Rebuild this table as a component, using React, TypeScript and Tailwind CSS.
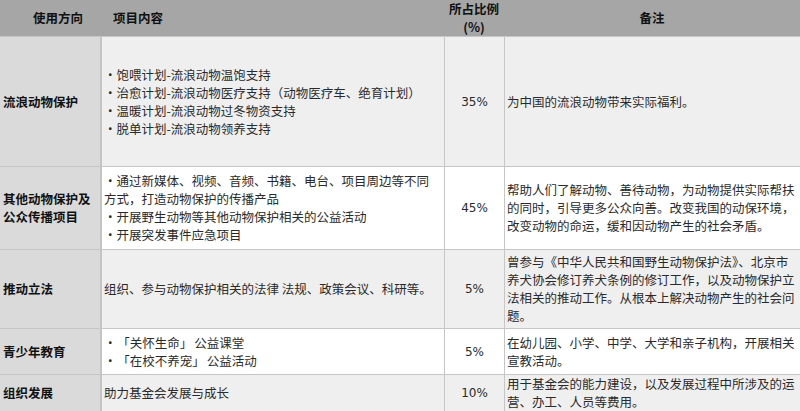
import React from "react";

const cjk = { fontFamily: '"Noto Sans CJK SC", "Noto Sans", sans-serif' };
const num = { fontFamily: '"DejaVu Sans", sans-serif' };

type Row = {
  label: string[];
  content: React.ReactNode[];
  pct: string;
  note: string[];
  h: string;
  bg: string;
};

const Open = () => <span className="pl-[7px]">「</span>;
const Close = () => <span className="pr-[2px]">」</span>;

const rows: Row[] = [
  {
    label: ["流浪动物保护"],
    content: [
      "・饱喂计划-流浪动物温饱支持",
      "・治愈计划-流浪动物医疗支持（动物医疗车、绝育计划）",
      "・温暖计划-流浪动物过冬物资支持",
      "・脱单计划-流浪动物领养支持",
    ],
    pct: "35%",
    note: ["为中国的流浪动物带来实际福利。"],
    h: "h-[130px]",
    bg: "bg-[#efefef]",
  },
  {
    label: ["其他动物保护及", "公众传播项目"],
    content: [
      "・通过新媒体、视频、音频、书籍、电台、项目周边等不同",
      "方式，打造动物保护的传播产品",
      "・开展野生动物等其他动物保护相关的公益活动",
      "・开展突发事件应急项目",
    ],
    pct: "45%",
    note: [
      "帮助人们了解动物、善待动物，为动物提供实际帮扶",
      "的同时，引导更多公众向善。改变我国的动保环境，",
      "改变动物的命运，缓和因动物产生的社会矛盾。",
    ],
    h: "h-[83px]",
    bg: "bg-white",
  },
  {
    label: ["推动立法"],
    content: ["组织、参与动物保护相关的法律 法规、政策会议、科研等。"],
    pct: "5%",
    note: [
      "曾参与《中华人民共和国野生动物保护法》、北京市",
      "养犬协会修订养犬条例的修订工作，以及动物保护立",
      "法相关的推动工作。从根本上解决动物产生的社会问",
      "题。",
    ],
    h: "h-[79px]",
    bg: "bg-[#efefef]",
  },
  {
    label: ["青少年教育"],
    content: [
      <>
        ・<Open />关怀生命<Close />公益课堂
      </>,
      <>
        ・<Open />在校不养宠<Close />公益活动
      </>,
    ],
    pct: "5%",
    note: ["在幼儿园、小学、中学、大学和亲子机构，开展相关", "宣教活动。"],
    h: "h-[46px]",
    bg: "bg-white",
  },
  {
    label: ["组织发展"],
    content: ["助力基金会发展与成长"],
    pct: "10%",
    note: ["用于基金会的能力建设，以及发展过程中所涉及的运", "营、办工、人员等费用。"],
    h: "h-[36px]",
    bg: "bg-[#efefef]",
  },
];

export default function App() {
  return (
    <div className="w-[800px] h-[411px] overflow-hidden bg-[#efefef]" style={cjk}>
      {/* header */}
      <div className="grid grid-cols-[102px_342px_60px_296px] h-[36px] bg-[#a6a6a6] text-[12.5px] font-bold text-[#111]">
        <div className="flex items-center pl-[33px]">使用方向</div>
        <div className="flex items-center pl-[11px]">项目内容</div>
        <div className="flex flex-col items-center justify-center leading-[18px]">
          <div>所占比例</div>
          <div>(%)</div>
        </div>
        <div className="flex items-center justify-center">备注</div>
      </div>
      {rows.map((r, i) => (
        <div
          key={i}
          className={`grid grid-cols-[102px_342px_60px_296px] border-t border-[#c6c6c6] ${r.h}`}
        >
          <div className="flex flex-col justify-center bg-[#dadada] border-r-2 border-[#c4c4c4] pl-[3px] text-[12.5px] font-bold leading-[18px] text-[#111]">
            {r.label.map((l, j) => (
              <div key={j} className="whitespace-nowrap">{l}</div>
            ))}
          </div>
          <div className={`flex flex-col justify-center pl-[2px] text-[12.5px] leading-[18px] text-[#2a2a2a] ${r.bg}`}>
            {r.content.map((l, j) => (
              <div key={j} className="whitespace-nowrap">{l}</div>
            ))}
          </div>
          <div
            className={`flex items-center justify-center border-l border-[#c6c6c6] text-[12px] text-[#2a2a2a] ${r.bg}`}
            style={num}
          >
            {r.pct}
          </div>
          <div className={`flex flex-col justify-center border-l border-[#c6c6c6] pl-[2px] text-[12.5px] leading-[18px] text-[#2a2a2a] ${r.bg}`}>
            {r.note.map((l, j) => (
              <div key={j} className="whitespace-nowrap">{l}</div>
            ))}
          </div>
        </div>
      ))}
      <div className="border-t border-[#c6c6c6]" />
    </div>
  );
}
